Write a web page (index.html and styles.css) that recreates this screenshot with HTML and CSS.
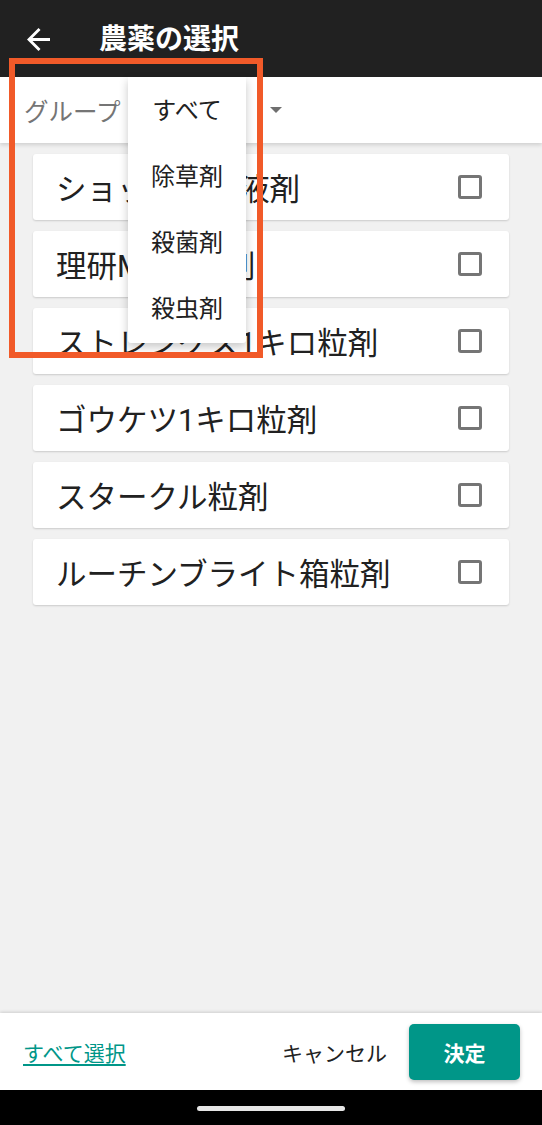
FILE: index.html
```html
<!DOCTYPE html>
<html lang="ja">
<head>
  <meta charset="UTF-8" />
  <meta name="viewport" content="width=device-width, initial-scale=1.0"/>
  <title>農薬の選択</title>
  <link rel="stylesheet" href="styles.css">
</head>
<body>
  <div class="screen">

    <header class="topbar">
      <button class="back" aria-label="戻る">
        <svg viewBox="4 4 16 16" width="23" height="23">
          <path d="M20 11H7.83l5.59-5.59L12 4l-8 8 8 8 1.41-1.41L7.83 13H20v-2z" fill="#fff"/>
        </svg>
      </button>
      <h1>農薬の選択</h1>
    </header>

    <div class="filter">
      <div class="select">
        <span class="select-label">グループ</span>
        <span class="caret"></span>
      </div>
    </div>

    <div class="list">
      <div class="card"><span>ショットワン液剤</span><span class="check"></span></div>
      <div class="card"><span>理研MD顆粒剤</span><span class="check"></span></div>
      <div class="card"><span>ストレングス1キロ粒剤</span><span class="check"></span></div>
      <div class="card"><span>ゴウケツ1キロ粒剤</span><span class="check"></span></div>
      <div class="card"><span>スタークル粒剤</span><span class="check"></span></div>
      <div class="card"><span>ルーチンブライト箱粒剤</span><span class="check"></span></div>
    </div>

    <footer class="actions">
      <a class="select-all" href="#">すべて選択</a>
      <div class="buttons">
        <button class="cancel">キャンセル</button>
        <button class="ok">決定</button>
      </div>
    </footer>

    <div class="navbar"><span class="pill"></span></div>

    <!-- 開いているドロップダウン -->
    <ul class="menu">
      <li>すべて</li>
      <li>除草剤</li>
      <li>殺菌剤</li>
      <li>殺虫剤</li>
    </ul>
    <div class="highlight"></div>

  </div>
</body>
</html>
```

FILE: styles.css
```css
body {
  margin: 0;
  padding: 0;
  font-family: Roboto, "Noto Sans CJK JP", sans-serif;
  color: #212121;
}
.screen {
  position: relative;
  width: 542px;
  height: 1125px;
  display: flex;
  flex-direction: column;
  background: #f1f1f1;
  overflow: hidden;
}
.topbar {
  height: 77px;
  flex-shrink: 0;
  background: #212121;
  display: flex;
  align-items: center;
  z-index: 2;
}
.back {
  background: none;
  border: none;
  padding: 0;
  margin: 2px 0 0 27px;
  width: 23px;
  height: 23px;
  display: flex;
}
.topbar h1 {
  margin: 0 0 0 49px;
  color: #fff;
  font-size: 28px;
  font-weight: bold;
  line-height: 1;
  padding-top: 2px;
}
.filter {
  height: 66px;
  flex-shrink: 0;
  background: #fff;
  box-shadow: 0 2px 4px rgba(0,0,0,0.14);
  display: flex;
  align-items: center;
  padding-left: 24px;
  z-index: 1;
}
.select {
  width: 258px;
  display: flex;
  align-items: center;
  justify-content: space-between;
}
.select-label {
  color: #757575;
  font-size: 24.5px;
}
.caret {
  width: 0;
  height: 0;
  border-left: 6px solid transparent;
  border-right: 6px solid transparent;
  border-top: 6px solid #6f6f6f;
}
.list {
  flex: 1;
  padding: 11px 33px;
  display: flex;
  flex-direction: column;
  gap: 11px;
}
.card {
  height: 66px;
  background: #fff;
  border-radius: 3px;
  box-shadow: 0 1px 2px rgba(0,0,0,0.16);
  display: flex;
  align-items: center;
  justify-content: space-between;
  padding: 0 27px 0 23px;
  font-size: 30.5px;
}
.check {
  width: 24px;
  height: 24px;
  box-sizing: border-box;
  border: 3px solid #757575;
  border-radius: 3px;
}
.actions {
  height: 77px;
  flex-shrink: 0;
  background: #fff;
  box-shadow: 0 -1px 3px rgba(0,0,0,0.15);
  display: flex;
  align-items: center;
  justify-content: space-between;
  padding: 0 22px 0 23px;
}
.select-all {
  color: #009688;
  font-size: 21px;
  text-decoration: underline;
  text-underline-offset: 3px;
}
.buttons {
  display: flex;
  align-items: center;
  gap: 22px;
}
.cancel {
  background: none;
  border: none;
  padding: 0;
  font-family: inherit;
  font-size: 21px;
  color: #212121;
}
.ok {
  width: 111px;
  height: 56px;
  background: #009688;
  color: #fff;
  border: none;
  border-radius: 5px;
  font-family: inherit;
  font-size: 21px;
  font-weight: bold;
  box-shadow: 0 2px 4px rgba(0,0,0,0.25);
}
.navbar {
  height: 35px;
  flex-shrink: 0;
  background: #000;
  display: flex;
  justify-content: center;
  padding-top: 16px;
  box-sizing: border-box;
}
.pill {
  width: 148px;
  height: 5px;
  border-radius: 3px;
  background: #e6e6e6;
}
.menu {
  position: absolute;
  left: 128px;
  top: 77px;
  width: 118px;
  margin: 0;
  padding: 0 0 2px;
  list-style: none;
  background: #fff;
  box-shadow: 0 4px 10px rgba(0,0,0,0.22);
  border-radius: 0 0 3px 3px;
  z-index: 3;
}
.menu li {
  height: 66px;
  display: flex;
  align-items: center;
  justify-content: center;
  font-size: 24px;
  padding-bottom: 3px;
  box-sizing: border-box;
}
.highlight {
  position: absolute;
  left: 9px;
  top: 58px;
  width: 254px;
  height: 300px;
  box-sizing: border-box;
  border: 6px solid #f15a29;
  z-index: 4;
}
```
